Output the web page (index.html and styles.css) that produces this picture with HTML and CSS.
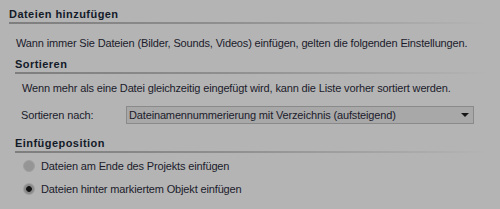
FILE: index.html
```html
<!DOCTYPE html>
<html>
<head>
    <meta charset="UTF-8">
    <link rel="stylesheet" href="styles.css">
</head>
<body>
    <div class="panel">
        <div class="heading main-heading">Dateien hinzufügen</div>
        <div class="rule"></div>
        <p class="intro">Wann immer Sie Dateien (Bilder, Sounds, Videos) einfügen, gelten die folgenden Einstellungen.</p>

        <div class="group">
            <div class="heading">Sortieren</div>
            <div class="rule"></div>
            <p class="hint">Wenn mehr als eine Datei gleichzeitig eingefügt wird, kann die Liste vorher sortiert werden.</p>
            <div class="select-row">
                <span class="select-label">Sortieren nach:</span>
                <div class="select">
                    <span>Dateinamennummerierung mit Verzeichnis (aufsteigend)</span>
                    <span class="arrow"></span>
                </div>
            </div>
        </div>

        <div class="group insert-group">
            <div class="heading">Einfügeposition</div>
            <div class="rule"></div>
            <label class="radio">
                <span class="radio-dot"></span>
                Dateien am Ende des Projekts einfügen
            </label>
            <label class="radio">
                <span class="radio-dot checked"></span>
                Dateien hinter markiertem Objekt einfügen
            </label>
        </div>
    </div>
</body>
</html>
```

FILE: styles.css
```css
body {
    margin: 0;
    width: 500px;
    height: 209px;
    overflow: hidden;
    background: #b4b4b4;
    font-family: "Liberation Sans", Arial, sans-serif;
    font-size: 11px;
    line-height: 14px;
    letter-spacing: -0.15px;
    color: #1b1b2b;
}

.panel {
    padding: 7px 0 0 9px;
}

.heading {
    font-weight: bold;
    letter-spacing: 0.45px;
    color: #131a28;
}

.rule {
    height: 2px;
    margin-top: 1px;
    width: 478px;
    background: linear-gradient(90deg, #7e7e7e 0%, #8f8f8f 45%, rgba(180, 180, 180, 0) 100%);
}

p {
    margin: 0;
}

.intro {
    margin: 12px 0 0 7px;
}

.group {
    margin: 7px 0 0 6px;
}

.group .rule {
    width: 474px;
}

.hint {
    margin: 7px 0 0 7px;
}

.select-row {
    display: flex;
    align-items: center;
    margin: 11px 0 0 6px;
}

.select-label {
    width: 105px;
}

.select {
    display: flex;
    align-items: center;
    justify-content: space-between;
    box-sizing: border-box;
    width: 348px;
    height: 18px;
    padding: 0 4px 0 2px;
    border: 1px solid #8a8a8a;
    background: #a8a8a8;
}

.arrow {
    width: 0;
    height: 0;
    border-left: 4px solid transparent;
    border-right: 4px solid transparent;
    border-top: 4px solid #161616;
}

.insert-group {
    margin-top: 12px;
}

.insert-group .rule {
    margin-bottom: 6px;
}

.radio {
    display: flex;
    align-items: center;
    gap: 6px;
    margin-left: 8px;
    height: 14px;
    margin-bottom: 9px;
}

.radio-dot {
    width: 12px;
    height: 12px;
    border-radius: 50%;
    background: #959595;
    border: 1px solid #a0a0a0;
    box-sizing: border-box;
}

.radio-dot.checked {
    background: radial-gradient(circle, #121212 0, #121212 2.5px, #8a8a8a 3.2px);
}
```
